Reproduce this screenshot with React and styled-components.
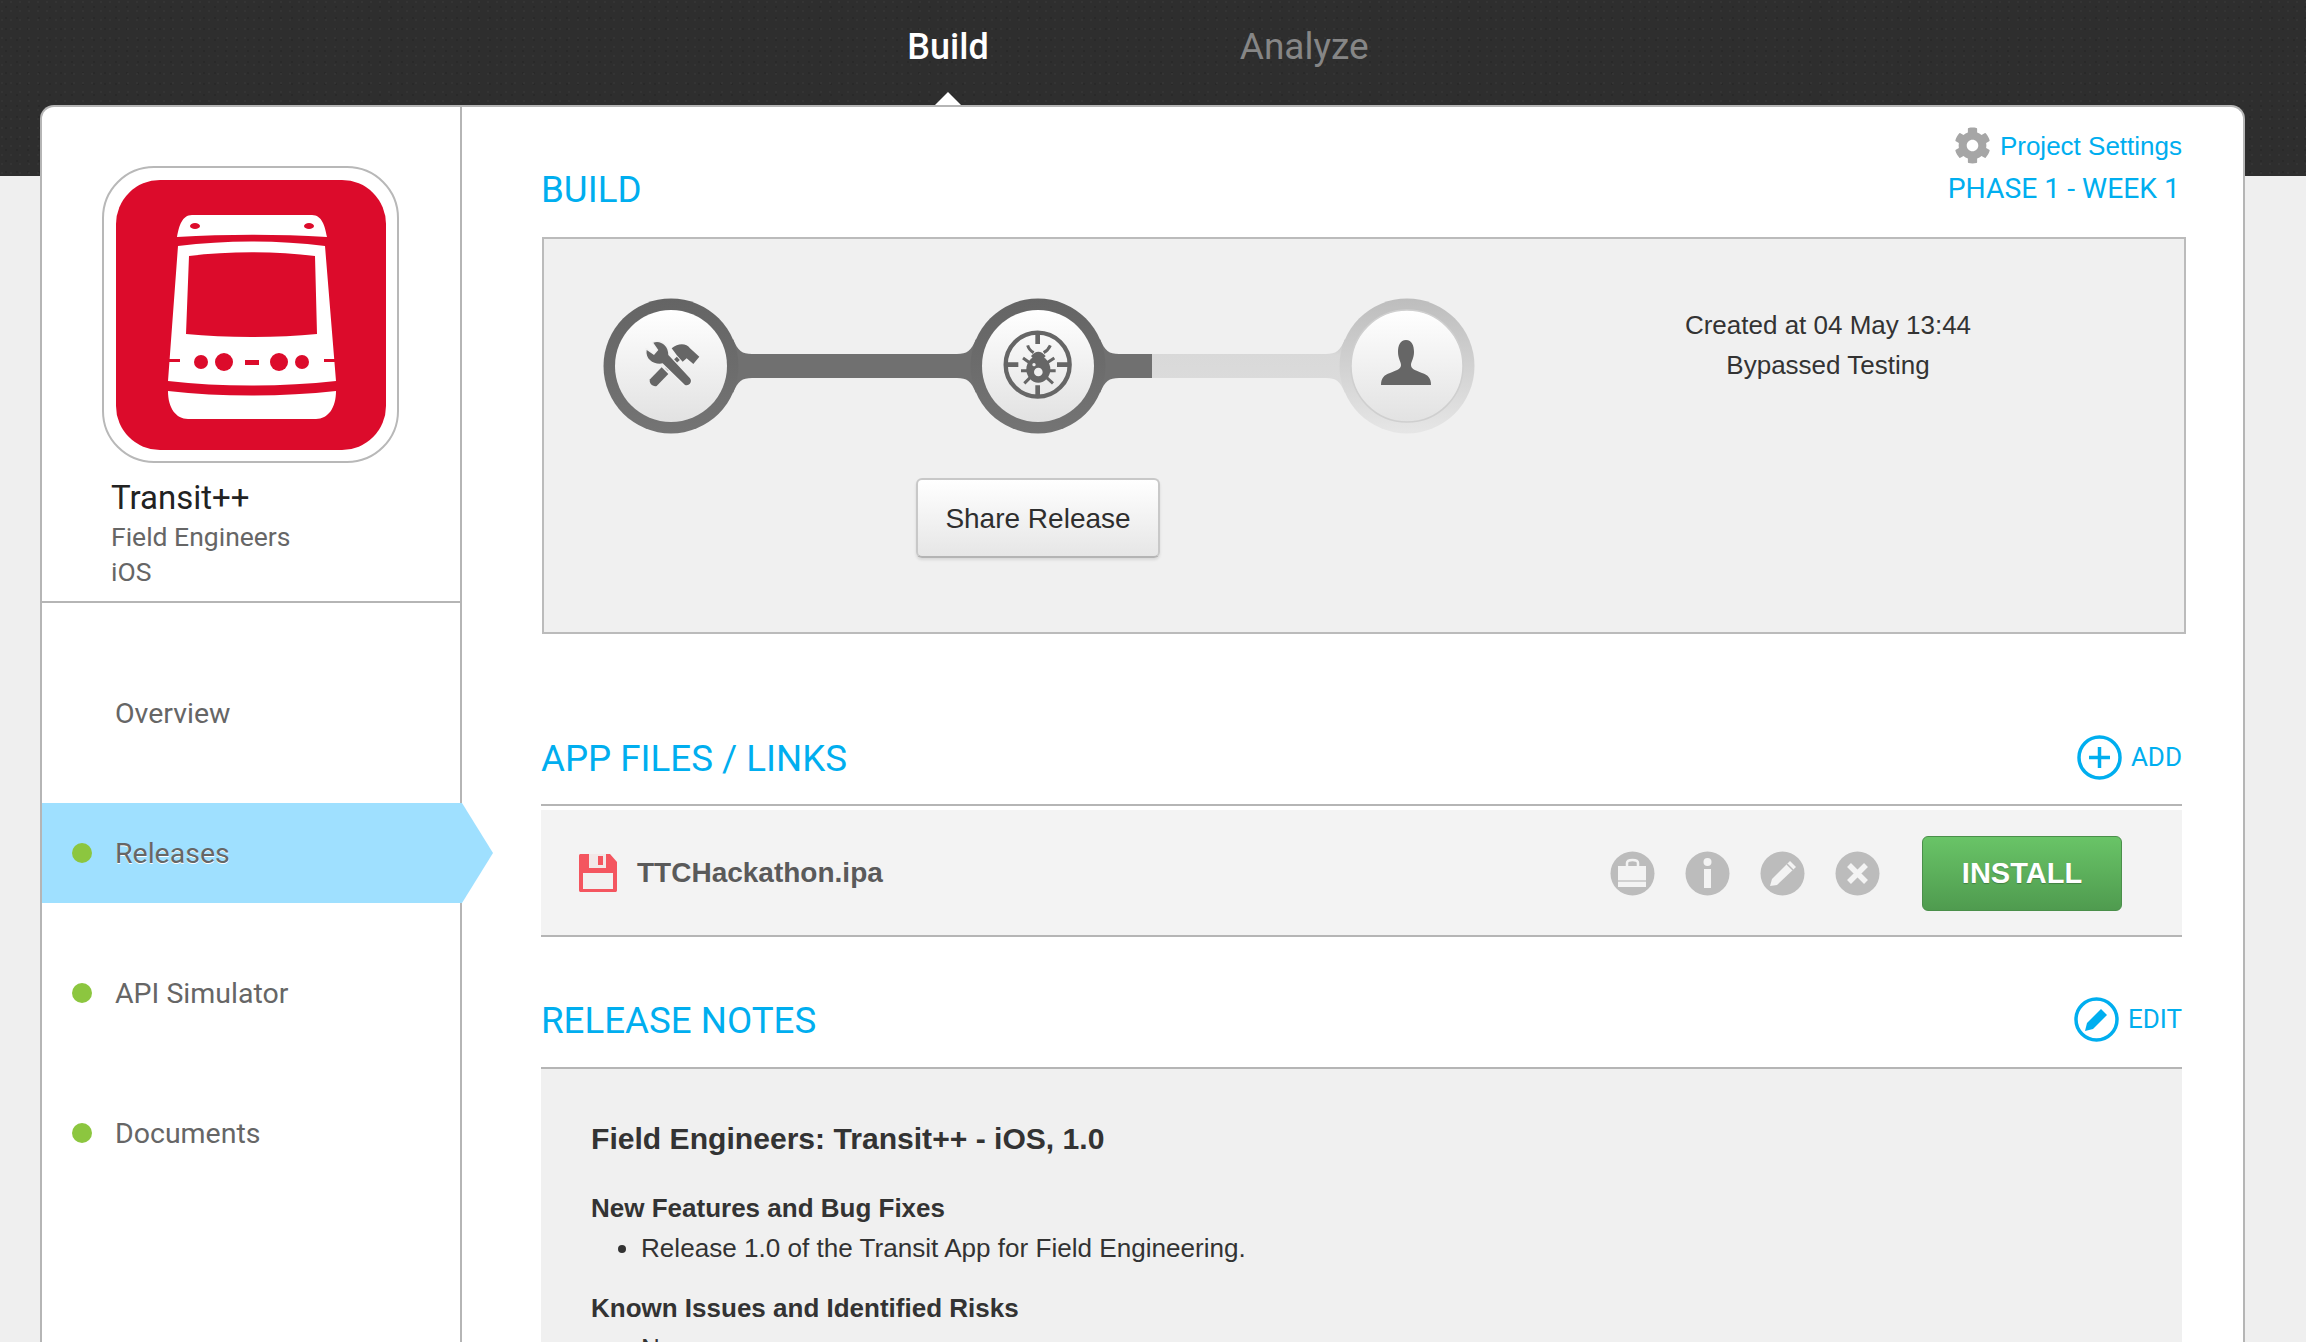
import React from "react";
import styled, { createGlobalStyle } from "styled-components";
import { FaCog } from "react-icons/fa";

const BLUE = "#00aeef";
const Global = createGlobalStyle`
  html, body { margin: 0; padding: 0; height: 1342px; overflow: hidden; background: #efefef; }
  body { font-family: "Liberation Sans", Arial, sans-serif; color: #333; }
  * { box-sizing: border-box; }
`;
const Page = styled.div`height: 1342px; overflow: hidden;`;
const TopBar = styled.header`
  height: 176px; padding: 22px 30px 0 0; background-color: #2e2e2e;
  background-image: radial-gradient(circle at 2px 2px, #343434 1px, transparent 1.5px), radial-gradient(circle at 6px 7px, #292929 1px, transparent 1.5px);
  background-size: 9px 9px, 11px 11px;
  display: flex; justify-content: center; gap: 251px;
  font: 500 36px/50px Roboto, sans-serif;
`;
const NavTab = styled.div`
  color: ${p => (p.$active ? "#fff" : "#868686")};
  font-weight: ${p => (p.$active ? 500 : 400)};
  font-size: ${p => (p.$active ? 36 : 37)}px;
  position: relative; height: 50px;
  ${p => p.$active && `&::after { content: ""; position: absolute; left: 50%; margin-left: -13px; top: 70px; border: 13px solid transparent; border-top: 0; border-bottom-color: #fff; }`}
`;
const Card = styled.div`
  width: 2205px; height: 1300px; margin: -71px 0 0 40px; background: #fff;
  border: 2px solid #b5b5b5; border-bottom: 0; border-radius: 14px 14px 0 0;
  display: flex; position: relative;
`;
const Sidebar = styled.aside`width: 420px; flex: none; border-right: 2px solid #b5b5b5; font-family: Roboto, sans-serif;`;
const Brand = styled.div`height: 496px; padding: 59px 0 0 60px; border-bottom: 2px solid #b5b5b5;`;
const IconFrame = styled.div`width: 297px; height: 297px; border: 2px solid #b8b8b8; border-radius: 52px; padding: 12px;`;
const AppIcon = styled.svg`display: block; width: 270px; height: 270px;`;
const AppName = styled.div`margin: 14px 0 0 9px; font-size: 33px; line-height: 42px; color: #222;`;
const AppMeta = styled.div`margin-left: 9px; font-size: 26.5px; line-height: 35px; color: #666;`;
const Nav = styled.nav`padding-top: 60px; display: flex; flex-direction: column; gap: 40px;`;
const NavItem = styled.div`
  height: 100px; width: calc(100% + 2px); padding-left: 30px; position: relative;
  display: flex; align-items: center; font-size: 28.5px; color: #666;
  ${p => p.$active && `background: #9fe0ff; text-shadow: 0 1px 0 #fff;
    &::after { content: ""; position: absolute; left: 100%; top: 0; border-style: solid; border-width: 50px 0 50px 31px; border-color: transparent transparent transparent #9fe0ff; }`}
`;
const Dot = styled.span`width: 20px; height: 20px; border-radius: 50%; background: ${p => (p.$hidden ? "transparent" : "#8cc63f")}; margin-right: 23px; flex: none;`;
const Main = styled.main`flex: 1; padding-left: 79px; padding-right: 61px; min-width: 0;`;
const Heading = styled.h2`margin: 0; font: 400 36.7px/44px Roboto, sans-serif; color: ${BLUE};`;
const BuildHead = styled.div`height: 130px; display: flex; justify-content: space-between; align-items: flex-end; padding-bottom: 25px;`;
const SettingsCol = styled.div`display: flex; flex-direction: column; align-items: flex-end; color: ${BLUE}; margin-bottom: 3px;`;
const SettingsLink = styled.div`display: flex; align-items: center; gap: 9px; font-size: 26px; line-height: 36px;`;
const Phase = styled.div`font: 400 28.3px/40px Roboto, sans-serif; margin: 5px 2px 0 0;`;
const BuildBox = styled.section`
  width: 1644px; margin-left: 1px; height: 397px; background: #f0f0f0; border: 2px solid #bbb; padding: 52px 0 0 56px; display: flex;
`;
const StepCol = styled.div`width: 880px; flex: none;`;
const Stepper = styled.svg`display: block; width: 880px; height: 150px;`;
const ShareButton = styled.button`
  display: block; margin: 37px 0 0 316px; width: 244px; height: 80px; padding-top: 3px; border: 2px solid #c8c8c8; border-bottom-color: #b4b4b4; border-radius: 6px;
  background: linear-gradient(#fff, #e6e6e6); font: 28px "Liberation Sans", Arial, sans-serif; color: #2e2e2e;
  box-shadow: 0 2px 3px rgba(0,0,0,.1);
`;
const BuildInfo = styled.div`width: 500px; margin: 14px 0 0 98px; text-align: center; font-size: 26px; line-height: 40px; color: #333;`;
const SectionHead = styled.div`
  height: ${p => p.$h}px; display: flex; justify-content: space-between; align-items: flex-end;
  border-bottom: 2px solid #b5b5b5; padding-bottom: ${p => p.$pb}px;
`;
const HeadAction = styled.div`display: flex; align-items: center; gap: ${p => p.$gap}px; font: 400 26px/46px Roboto, sans-serif; color: ${BLUE}; margin-bottom: 1px;`;
const RoundIcon = styled.svg`display: block; width: ${p => p.$s || 45}px; height: ${p => p.$s || 45}px; flex: none;`;
const FileRow = styled.div`
  margin-top: 4px; height: 127px; background: #f3f3f3; border-bottom: 2px solid #b5b5b5; padding: 1px 60px 0 37px; display: flex; align-items: center;
`;
const FileName = styled.div`margin-left: 19px; font-size: 28px; font-weight: 700; color: #5a5a5a;`;
const Actions = styled.div`margin-left: auto; display: flex; gap: 30px;`;
const InstallButton = styled.button`
  margin-left: 42px; width: 200px; height: 75px; border: 1px solid #4a8f4a; border-radius: 6px; background: linear-gradient(#69c467, #4f9b4f);
  color: #fff; font: 700 29px "Liberation Sans", Arial, sans-serif; text-shadow: 0 1px 1px rgba(0,0,0,.25);
`;
const NotesPanel = styled.section`background: #f0f0f0; height: 300px; padding: 50px 0 0 50px; color: #333;`;
const NotesTitle = styled.div`font-size: 30.1px; font-weight: 700; line-height: 40px; margin-bottom: 31px;`;
const NotesSub = styled.div`font-size: 26px; font-weight: 700; line-height: 36px;`;
const NotesList = styled.ul`margin: 4px 0 24px; padding: 0 0 0 50px; font-size: 26.1px; line-height: 36px;`;

const link = (x1, x2) =>
  `M${x1 + 62} 48C${x1 + 67} 60 ${x1 + 71} 63 ${x1 + 81} 63L${x2 - 81} 63C${x2 - 71} 63 ${x2 - 67} 60 ${x2 - 62} 48L${x2 - 62} 102C${x2 - 67} 90 ${x2 - 71} 87 ${x2 - 81} 87L${x1 + 81} 87C${x1 + 71} 87 ${x1 + 67} 90 ${x1 + 62} 102Z`;

const GREY = "#666";
const StepperGraphic = () => (
  <Stepper viewBox="0 0 880 150">
    <defs>
      <linearGradient id="knob" x1="0" y1="0" x2="0" y2="1"><stop offset="0" stopColor="#fff" /><stop offset="1" stopColor="#e2e2e2" /></linearGradient>
      <linearGradient id="ringLight" x1="0" y1="0" x2="0" y2="1"><stop offset="0" stopColor="#bdbdbd" /><stop offset="1" stopColor="#e6e6e6" /></linearGradient>
      <linearGradient id="ringDark" x1="0" y1="0" x2="0" y2="1"><stop offset="0" stopColor="#646464" /><stop offset="1" stopColor="#747474" /></linearGradient>
      <linearGradient id="barLight" x1="0" y1="0" x2="0" y2="1"><stop offset="0" stopColor="#c4c4c4" /><stop offset="0.3" stopColor="#d9d9d9" /><stop offset="1" stopColor="#dcdcdc" /></linearGradient>
      <clipPath id="darkPart"><rect x="0" y="0" width="552" height="150" /></clipPath>
      <clipPath id="lightPart"><rect x="552" y="0" width="328" height="150" /></clipPath>
    </defs>
    <path d={link(438, 807)} fill="url(#barLight)" clipPath="url(#lightPart)" />
    <circle cx="807" cy="75" r="67.5" fill="url(#ringLight)" />
    <path d={link(71, 438)} fill="#707070" />
    <path d={link(438, 807)} fill="#707070" clipPath="url(#darkPart)" />
    <circle cx="71" cy="75" r="67.5" fill="url(#ringDark)" />
    <circle cx="438" cy="75" r="67.5" fill="url(#ringDark)" />
    <circle cx="71" cy="75" r="56" fill="url(#knob)" />
    <circle cx="438" cy="75" r="56" fill="url(#knob)" />
    <circle cx="807" cy="75" r="56" fill="url(#knob)" stroke="#cfcfcf" strokeWidth="1.5" />

    <g transform="translate(40 39) scale(0.3333)" fill={GREY}>
      <path d="M95 55C115 38 140 40 150 55L178 80L160 102L140 85L128 95L110 75Z" />
      <path d="M115 85L80 118" stroke={GREY} strokeWidth="13" />
      <path d="M65 112L85 132L50 168C40 172 25 160 30 148Z" />
      <path d="M20 60L42 75L55 60L40 38C60 30 85 45 85 75L150 145C158 155 148 170 135 165L68 100C45 105 15 90 20 60Z" stroke="#f0f0f0" strokeWidth="8" paintOrder="stroke" />
    </g>

    <g transform="translate(395 31) scale(0.3333)" fill="none" stroke={GREY}>
      <circle cx="128" cy="128" r="96" strokeWidth="13" />
      <path d="M128 30V66M128 226V190M30 128H70M226 128H186" strokeWidth="14" />
      <path d="M108 102Q130 76 152 102L145 110H115Z" fill={GREY} stroke="none" />
      <ellipse cx="130" cy="142" rx="36" ry="40" fill={GREY} stroke="none" />
      <path d="M98 70Q102 84 116 92M166 70Q160 84 146 92M84 108L106 124M178 108L154 124M78 146H100M182 146H160M88 184L106 166M174 184L154 166" strokeWidth="9" />
      <circle cx="130" cy="150" r="13" fill="#efefef" stroke="none" />
      <circle cx="117" cy="128" r="5" fill="#efefef" stroke="none" />
    </g>

    <path transform="translate(806 71)" fill={GREY} d="M0 -22C6 -22 8 -16 8 -10C8 -4 5 0 5 3C5 7 9 8 16 11C22 13 25 16 25 23L-25 23C-25 16 -22 13 -16 11C-9 8 -5 7 -5 3C-5 0 -8 -4 -8 -10C-8 -16 -6 -22 0 -22Z" />
  </Stepper>
);

const Action = ({ children }) => (
  <RoundIcon viewBox="0 0 45 45">
    <circle cx="22.5" cy="22.5" r="22" fill="#bcbcbc" />
    {children}
  </RoundIcon>
);

export default function App() {
  return (
    <Page>
      <Global />
      <TopBar>
        <NavTab $active>Build</NavTab>
        <NavTab>Analyze</NavTab>
      </TopBar>
      <Card>
        <Sidebar>
          <Brand>
            <IconFrame>
              <AppIcon viewBox="0 0 270 270">
                <rect width="270" height="270" rx="44" fill="#dc0b2b" />
                <path d="M61 57C63 46 66 35 76 35H196C206 35 209 46 211 57C160 54 112 54 61 57Z" fill="#fff" />
                <ellipse cx="79" cy="46" rx="5" ry="3" fill="#dc0b2b" />
                <ellipse cx="193" cy="46" rx="5" ry="3" fill="#dc0b2b" />
                <path fillRule="evenodd" fill="#fff" d="M62 66C110 60 160 60 209 66L220 201C165 207 105 207 52 201ZM73 76L70 154C110 158 160 158 201 154L199 76C160 71 112 71 73 76Z" />
                <g fill="#dc0b2b">
                  <circle cx="85" cy="182" r="7" /><circle cx="108" cy="182" r="9" /><rect x="129" y="180" width="14" height="5" /><circle cx="163" cy="182" r="9" /><circle cx="186" cy="182" r="7" />
                  <rect x="52" y="179" width="12" height="3" /><rect x="208" y="179" width="12" height="3" />
                </g>
                <path d="M52 211C105 217 165 217 220 211C220 228 212 239 200 239H72C60 239 52 228 52 211Z" fill="#fff" />
              </AppIcon>
            </IconFrame>
            <AppName>Transit++</AppName>
            <AppMeta>Field Engineers</AppMeta>
            <AppMeta>iOS</AppMeta>
          </Brand>
          <Nav>
            <NavItem><Dot $hidden />Overview</NavItem>
            <NavItem $active><Dot />Releases</NavItem>
            <NavItem><Dot />API Simulator</NavItem>
            <NavItem><Dot />Documents</NavItem>
          </Nav>
        </Sidebar>
        <Main>
          <BuildHead>
            <Heading>BUILD</Heading>
            <SettingsCol>
              <SettingsLink><FaCog size={37} color="#a6a6a6" />Project Settings</SettingsLink>
              <Phase>PHASE 1 - WEEK 1</Phase>
            </SettingsCol>
          </BuildHead>
          <BuildBox>
            <StepCol>
              <StepperGraphic />
              <ShareButton>Share Release</ShareButton>
            </StepCol>
            <BuildInfo>
              <div>Created at 04 May 13:44</div>
              <div>Bypassed Testing</div>
            </BuildInfo>
          </BuildBox>
          <SectionHead $h={172} $pb={23}>
            <Heading>APP FILES / LINKS</Heading>
            <HeadAction $gap={9}>
              <RoundIcon viewBox="0 0 45 45">
                <circle cx="22.5" cy="22.5" r="20.5" fill="none" stroke={BLUE} strokeWidth="3.5" />
                <path d="M22.5 12V33M12 22.5H33" stroke={BLUE} strokeWidth="3.5" />
              </RoundIcon>
              ADD
            </HeadAction>
          </SectionHead>
          <FileRow>
            <RoundIcon $s={40} viewBox="0 0 40 40">
              <path d="M1 3C1 1.5 1.5 1 3 1H32L39 9V37C39 38.5 38.5 39 37 39H3C1.5 39 1 38.5 1 37Z" fill="#f4555f" />
              <rect x="5" y="20" width="30" height="16" fill="#f2f0f0" />
              <path d="M11 1H28V15H11Z" fill="#f2e8e8" />
              <path d="M20 3H25V12H20Z" fill="#f4555f" />
            </RoundIcon>
            <FileName>TTCHackathon.ipa</FileName>
            <Actions>
              <Action>
                <path d="M8 15H36V36H8Z" fill="#f3f3f3" />
                <path d="M17 15V12C17 8 28 8 28 12V15" fill="none" stroke="#f3f3f3" strokeWidth="2.5" />
                <path d="M8 30H36" stroke="#d0d0d0" strokeWidth="2" />
              </Action>
              <Action>
                <circle cx="22.5" cy="11" r="4" fill="#f3f3f3" />
                <rect x="19" y="18" width="7" height="19" fill="#f3f3f3" />
              </Action>
              <Action>
                <path d="M30 10L36 16L17 34L10 35L12 28Z" fill="#f3f3f3" />
                <path d="M27 13L33 19" stroke="#bcbcbc" strokeWidth="1.5" />
              </Action>
              <Action>
                <path d="M14 14L31 31M31 14L14 31" stroke="#f3f3f3" strokeWidth="5.5" />
              </Action>
            </Actions>
            <InstallButton>INSTALL</InstallButton>
          </FileRow>
          <SectionHead $h={132} $pb={24}>
            <Heading>RELEASE NOTES</Heading>
            <HeadAction $gap={9}>
              <RoundIcon viewBox="0 0 45 45">
                <circle cx="22.5" cy="22.5" r="20.5" fill="none" stroke={BLUE} strokeWidth="3.5" />
                <path d="M27 12L33 18L19 32L11 34L13 26Z" fill={BLUE} />
              </RoundIcon>
              EDIT
            </HeadAction>
          </SectionHead>
          <NotesPanel>
            <NotesTitle>Field Engineers: Transit++ - iOS, 1.0</NotesTitle>
            <NotesSub>New Features and Bug Fixes</NotesSub>
            <NotesList><li>Release 1.0 of the Transit App for Field Engineering.</li></NotesList>
            <NotesSub>Known Issues and Identified Risks</NotesSub>
            <NotesList><li>None</li></NotesList>
          </NotesPanel>
        </Main>
      </Card>
    </Page>
  );
}
